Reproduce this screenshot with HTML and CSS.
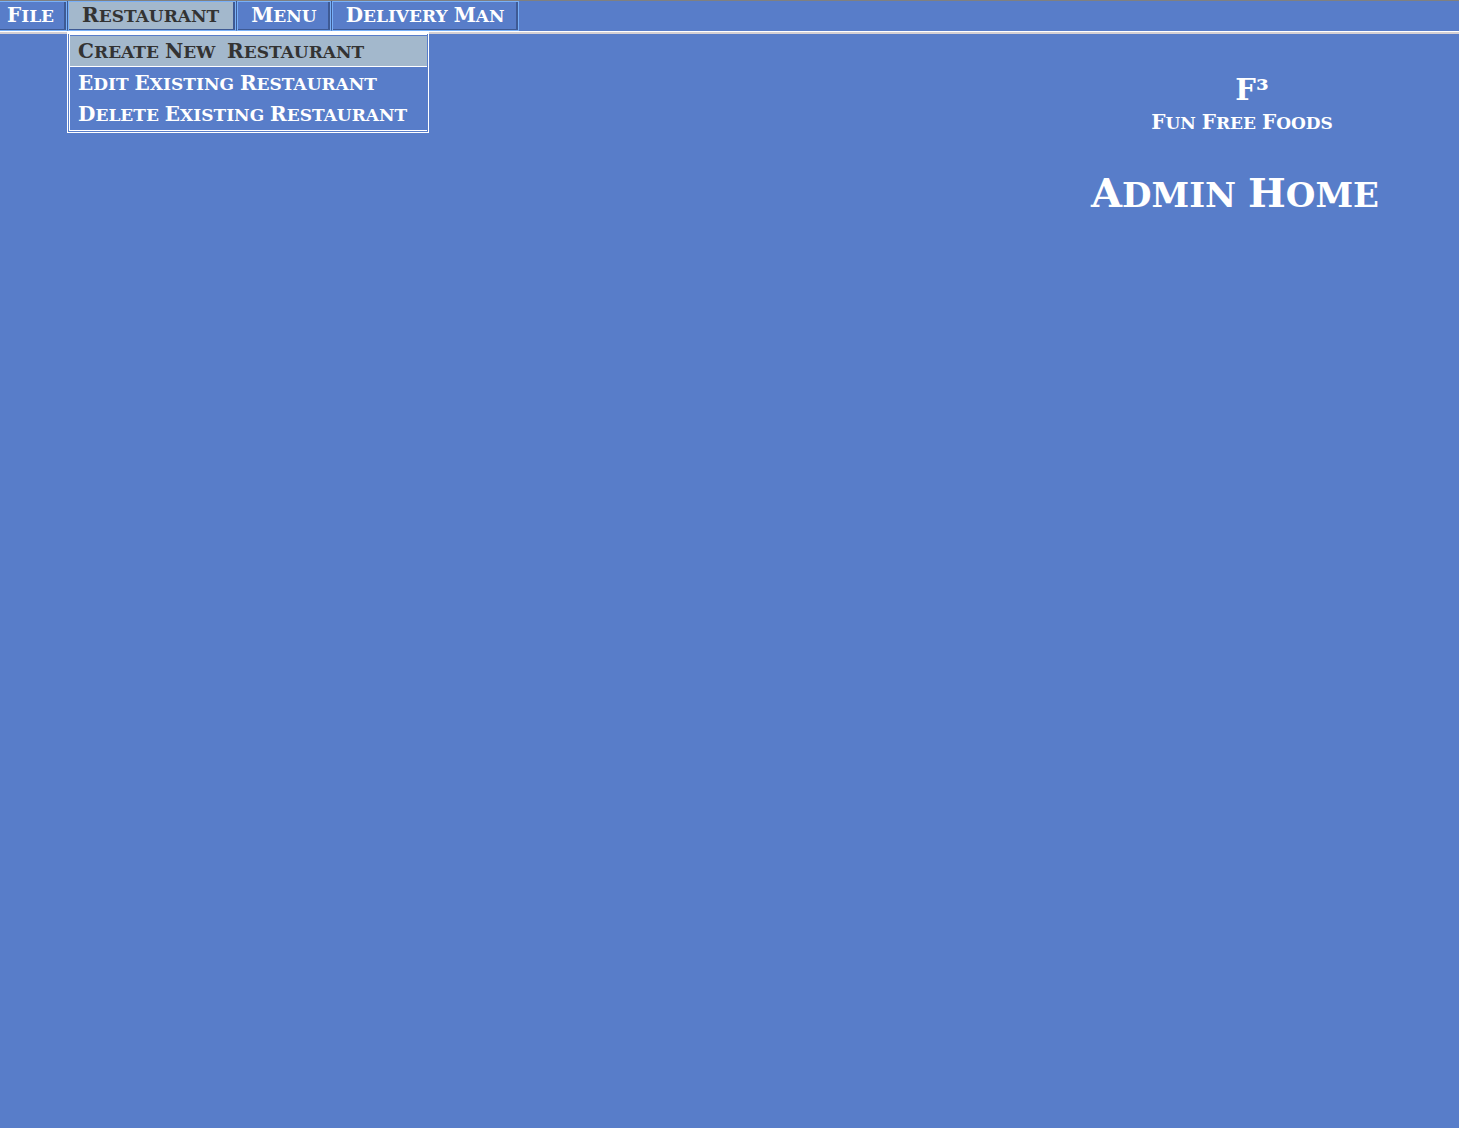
FILE: index.html
```html
<!DOCTYPE html>
<html lang="en">
<head>
<meta charset="utf-8">
<title>Admin Home</title>
<link rel="stylesheet" href="styles.css">
</head>
<body>
<nav class="menubar caps" aria-label="Main menu">
  <button type="button" class="menu menu-first"><span>File</span></button>
  <div class="menu-holder">
    <button type="button" class="menu menu-open" aria-expanded="true"><span>Restaurant</span></button>
    <div class="popup">
      <button type="button" class="item item-active"><span>Create</span> <span>New</span>&nbsp; <span>Restaurant</span></button>
      <button type="button" class="item"><span>Edit</span> <span>Existing</span> <span>Restaurant</span></button>
      <button type="button" class="item"><span>Delete</span> <span>Existing</span> <span>Restaurant</span></button>
    </div>
  </div>
  <button type="button" class="menu"><span>Menu</span></button>
  <button type="button" class="menu"><span>Delivery</span> <span>Man</span></button>
</nav>
<main class="content">
  <header class="brand caps">
    <p class="logo">F³</p>
    <p class="tagline"><span>Fun</span> <span>Free</span> <span>Foods</span></p>
    <h1 class="title"><span>Admin</span> <span>Home</span></h1>
  </header>
</main>
</body>
</html>
```
FILE: styles.css
```css
* { box-sizing: border-box; }

body {
  margin: 0;
  min-height: 100vh;
  background: #587dc9;
  color: #fff;
  font: bold 17px/20px "DejaVu Serif", serif;
}

/* Large initials followed by smaller capitals */
.caps { text-transform: uppercase; }
.caps span { display: inline-block; }
.caps span::first-letter { font-size: 20px; }

.menubar {
  display: flex;
  height: 34px;
  border-top: 1px solid #808080;
  border-bottom: 2px solid #d4d0d4;
  box-shadow: inset 0 -1px #fff;
}

.menu,
.item {
  margin: 0;
  border: 0;
  background: #587dc9;
  color: inherit;
  font: inherit;
  text-transform: inherit;
  text-align: left;
  white-space: nowrap;
}

.menu {
  height: 30px;
  padding: 0 13px 0 14px;
  border: solid;
  border-width: 0 1px 1px;
  border-color: #78b0f8 #78b0f8 #78b0f8 #3e5a94;
  box-shadow: inset 1px 1px #78b0f8, inset -2px -1px #3e5a94;
}
.menu-first {
  padding: 0 12px 0 7px;
  border-left: 0;
  box-shadow: inset 0 1px #78b0f8, inset -2px -1px #3e5a94;
}
.menu-open { padding-right: 16px; background-color: #a3b8cc; color: #333; }

.menu-holder { position: relative; }

.popup {
  position: absolute;
  z-index: 1;
  top: 30px;
  left: 0;
  width: 362px;
  padding: 1px;
  border: 1px solid #fff;
  background: #587dc9;
  box-shadow: inset 0 2px #fff;
}

.item {
  display: block;
  width: 100%;
  height: 32px;
  padding: 0 8px;
  border-left: 1px solid #fff;
}
.item:last-child { border-bottom: 1px solid #fff; }
.item-active {
  height: 34px;
  padding-top: 2px;
  border-top: 2px solid #fff;
  border-bottom: 1px solid #fff;
  background: #a3b8cc;
  box-shadow: inset 0 1px #587dc9;
  color: #333;
}

.content {
  display: flex;
  justify-content: flex-end;
  padding: 38px 80px 0 16px;
}
.brand { text-align: center; }
.logo {
  margin: 0 0 4px;
  padding-left: 34px;
  font-size: 29px;
  line-height: 36px;
}
.tagline { margin: 0; padding-left: 14px; }
.title {
  margin: 36px 0 0;
  font-size: 34px;
  line-height: 48px;
}
.title span::first-letter { font-size: 40px; }
```
